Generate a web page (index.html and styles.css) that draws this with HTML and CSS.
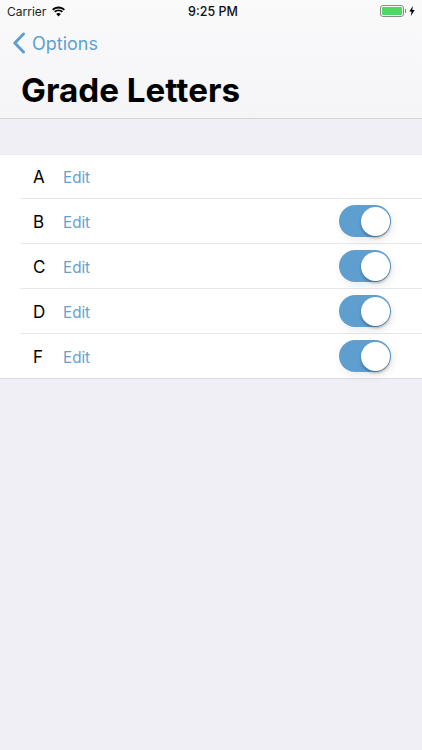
FILE: index.html
```html
<!DOCTYPE html>
<html lang="en">
<head>
  <meta charset="UTF-8">
  <meta name="viewport" content="width=device-width, initial-scale=1.0">
  <title>Grade Letters</title>
  <link rel="stylesheet" href="styles.css">
</head>
<body>
  <div class="header">
    <div class="status-bar">
      <div class="status-left">
        <span>Carrier</span>
        <svg class="wifi" width="15" height="11" viewBox="0 0 15 11">
          <path d="M7.5 2.4c2 0 3.9.8 5.3 2.1l1.1-1.2C12.2 1.6 9.9.6 7.5.6S2.8 1.6 1.1 3.3l1.1 1.2c1.4-1.3 3.3-2.1 5.3-2.1z" fill="#000"/>
          <path d="M7.5 5.2c1.2 0 2.4.5 3.3 1.3l1.1-1.2C10.7 4.2 9.2 3.5 7.5 3.5s-3.2.7-4.4 1.8l1.1 1.2c.9-.8 2.1-1.3 3.3-1.3z" fill="#000"/>
          <path d="M7.5 10.4l2.3-2.5c-.6-.6-1.4-.9-2.3-.9s-1.7.3-2.3.9z" fill="#000"/>
        </svg>
      </div>
      <div class="status-time">9:25 PM</div>
      <div class="status-right">
        <div class="battery"><div class="battery-fill"></div></div>
        <div class="battery-tip"></div>
        <svg class="bolt" width="6" height="10" viewBox="0 0 6 10">
          <path d="M3.8 0L.3 5.6h2.2L1.9 10l3.8-6H3.3z" fill="#000"/>
        </svg>
      </div>
    </div>
    <div class="nav-bar">
      <svg class="back-icon" width="14" height="22" viewBox="0 0 14 22">
        <path d="M11.5 2L2.8 11l8.7 9" fill="none" stroke="#5f9fd0" stroke-width="3" stroke-linecap="round" stroke-linejoin="round"/>
      </svg>
      <span class="back-label">Options</span>
    </div>
    <h1 class="title">Grade Letters</h1>
  </div>

  <div class="list">
    <div class="row">
      <span class="letter">A</span>
      <span class="edit">Edit</span>
    </div>
    <div class="row">
      <span class="letter">B</span>
      <span class="edit">Edit</span>
      <div class="switch"><div class="knob"></div></div>
    </div>
    <div class="row">
      <span class="letter">C</span>
      <span class="edit">Edit</span>
      <div class="switch"><div class="knob"></div></div>
    </div>
    <div class="row">
      <span class="letter">D</span>
      <span class="edit">Edit</span>
      <div class="switch"><div class="knob"></div></div>
    </div>
    <div class="row">
      <span class="letter">F</span>
      <span class="edit">Edit</span>
      <div class="switch"><div class="knob"></div></div>
    </div>
  </div>
</body>
</html>
```

FILE: styles.css
```css
html, body {
  height: 100%;
}

body {
  margin: 0;
  background-color: #efeff5;
  font-family: 'Inter', 'Liberation Sans', sans-serif;
  color: #000;
  overflow: hidden;
}

.header {
  height: 118px;
  background-image: linear-gradient(#fafafb, #f5f5f8);
  border-bottom: 1px solid #d4d4dc;
}

.status-bar {
  height: 22px;
  display: flex;
  align-items: center;
  padding: 0 7px;
  font-size: 12px;
}

.status-left {
  flex: 1;
  display: flex;
  align-items: center;
  gap: 5px;
  color: #222;
}

.status-time {
  font-weight: 500;
  font-size: 12.5px;
  color: #111;
  margin-left: 4px;
}

.status-right {
  flex: 1;
  display: flex;
  align-items: center;
  justify-content: flex-end;
}

.battery {
  width: 24px;
  height: 12px;
  box-sizing: border-box;
  border: 1px solid #8a8a8a;
  border-radius: 3px;
  padding: 1px;
}

.battery-fill {
  height: 100%;
  background-color: #4cd964;
  border-radius: 1px;
}

.battery-tip {
  width: 1px;
  height: 4px;
  background-color: #8a8a8a;
  margin-left: 1px;
  margin-right: 3px;
}

.nav-bar {
  height: 42px;
  display: flex;
  align-items: center;
  padding-left: 12px;
  gap: 6px;
}

.back-label {
  font-size: 18px;
  color: #5f9fd0;
}

.title {
  margin: 0;
  padding: 5px 0 0 21px;
  font-size: 33.2px;
  line-height: 42px;
  font-weight: 700;
}

.list {
  margin-top: 35px;
  background-color: #fff;
  box-shadow: inset 0 1px #eaeaee;
  border-bottom: 1px solid #dcdce2;
}

.row {
  height: 45px;
  box-sizing: border-box;
  display: flex;
  align-items: center;
  margin-left: 20px;
  padding-left: 13px;
  padding-right: 31px;
  border-top: 1px solid #e8e8ec;
}

.row:first-child {
  height: 44px;
  border-top: none;
}

.letter {
  width: 30px;
  padding-top: 2px;
  font-size: 17px;
}

.edit {
  padding-top: 2px;
  font-size: 15.2px;
  color: #62a2d0;
}

.switch {
  margin-left: auto;
  width: 52px;
  height: 32px;
  border-radius: 16px;
  background-color: #5f9fd0;
  display: flex;
  justify-content: flex-end;
  align-items: center;
  padding-right: 1px;
  box-sizing: border-box;
  box-shadow: 2px 4px 8px rgba(0, 0, 0, 0.08);
}

.knob {
  width: 29px;
  height: 29px;
  border-radius: 50%;
  background-color: #fff;
  box-shadow: 0 2px 3px rgba(0, 0, 0, 0.3);
}
```
